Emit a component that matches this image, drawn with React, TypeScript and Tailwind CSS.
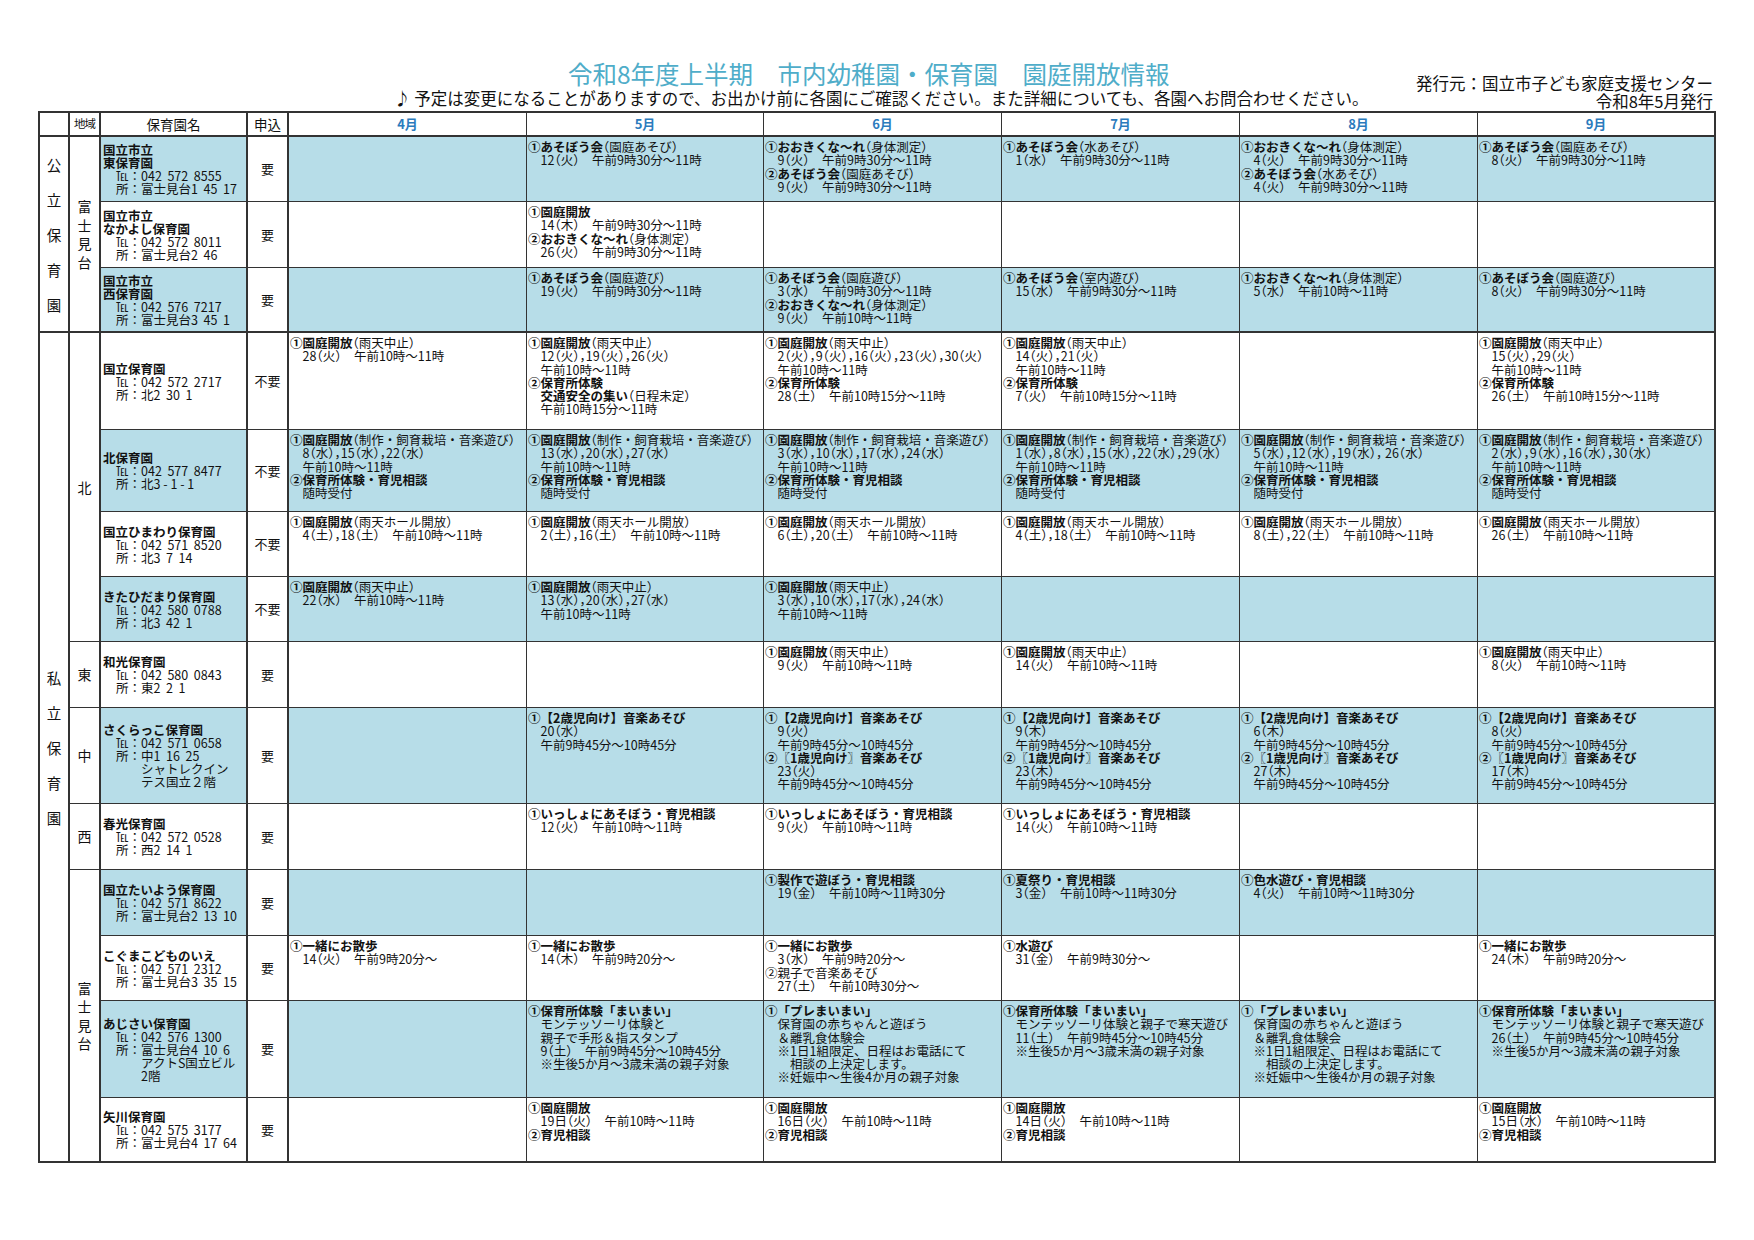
import React from "react";

type Row = {
  name: string[];
  tel: string;
  addr: string[];
  apply: string;
  blue: boolean;
  thick?: boolean;
  months: string[][];
};

const t10 = "午前10時～11時";
const t930 = "午前9時30分～11時";
const t945 = "午前9時45分～10時45分";

const kita = (d: string) => [
  "*①園庭開放*(制作・飼育栽培・音楽遊び)",
  "　" + d,
  "　" + t10,
  "*②保育所体験・育児相談*",
  "　随時受付",
];
const hima = (d: string) => ["*①園庭開放*(雨天ホール開放)", "　" + d + "　" + t10];
const rain = (d: string) => ["*①園庭開放*(雨天中止)", "　" + d + "　" + t10];
const music = (d1: string, d2: string) => [
  "*①【2歳児向け】音楽あそび*",
  "　" + d1,
  "　" + t945,
  "*②〖1歳児向け〗音楽あそび*",
  "　" + d2,
  "　" + t945,
];
const issho = (d: string) => ["*①いっしょにあそぼう・育児相談*", "　" + d + "　" + t10];
const walk = (d: string) => ["*①一緒にお散歩*", "　" + d + "　午前9時20分～"];
const maimai = (d: string) => [
  "*①保育所体験「まいまい」*",
  "　モンテッソーリ体験と親子で寒天遊び",
  "　" + d + "　" + t945,
  "　※生後5か月～3歳未満の親子対象",
];
const pre = [
  "*①「プレまいまい」*",
  "　保育園の赤ちゃんと遊ぼう",
  "　＆離乳食体験会",
  "　※1日1組限定、日程はお電話にて",
  "　　相談の上決定します。",
  "　※妊娠中～生後4か月の親子対象",
];
const yagawa = (d: string) => ["*①園庭開放*", "　" + d + "　" + t10, "*②育児相談*"];
const taiken = (d: string, t: string) => [
  "*①園庭開放*(雨天中止)",
  "　" + d,
  "　" + t10,
  "*②保育所体験*",
  "　" + t,
];

const rows: Row[] = [
  {
    name: ["国立市立", "東保育園"],
    tel: "042  572  8555",
    addr: ["富士見台1  45  17"],
    apply: "要",
    blue: true,
    months: [
      [],
      ["*①あそぼう会*(園庭あそび)", "　12(火)　" + t930],
      ["*①おおきくな～れ*(身体測定)", "　9(火)　" + t930, "*②あそぼう会*(園庭あそび)", "　9(火)　" + t930],
      ["*①あそぼう会*(水あそび)", "　1(水)　" + t930],
      ["*①おおきくな～れ*(身体測定)", "　4(火)　" + t930, "*②あそぼう会*(水あそび)", "　4(火)　" + t930],
      ["*①あそぼう会*(園庭あそび)", "　8(火)　" + t930],
    ],
  },
  {
    name: ["国立市立", "なかよし保育園"],
    tel: "042  572  8011",
    addr: ["富士見台2  46"],
    apply: "要",
    blue: false,
    months: [
      [],
      ["*①園庭開放*", "　14(木)　" + t930, "*②おおきくな～れ*(身体測定)", "　26(火)　" + t930],
      [],
      [],
      [],
      [],
    ],
  },
  {
    name: ["国立市立", "西保育園"],
    tel: "042  576  7217",
    addr: ["富士見台3  45  1"],
    apply: "要",
    blue: true,
    thick: true,
    months: [
      [],
      ["*①あそぼう会*(園庭遊び)", "　19(火)　" + t930],
      ["*①あそぼう会*(園庭遊び)", "　3(水)　" + t930, "*②おおきくな～れ*(身体測定)", "　9(火)　" + t10],
      ["*①あそぼう会*(室内遊び)", "　15(水)　" + t930],
      ["*①おおきくな～れ*(身体測定)", "　5(水)　" + t10],
      ["*①あそぼう会*(園庭遊び)", "　8(火)　" + t930],
    ],
  },
  {
    name: ["国立保育園"],
    tel: "042  572  2717",
    addr: ["北2  30  1"],
    apply: "不要",
    blue: false,
    months: [
      ["*①園庭開放*(雨天中止)", "　28(火)　" + t10],
      [
        "*①園庭開放*(雨天中止)",
        "　12(火),19(火),26(火)",
        "　" + t10,
        "*②保育所体験*",
        "　*交通安全の集い*(日程未定)",
        "　午前10時15分～11時",
      ],
      taiken("2(火),9(火),16(火),23(火),30(火)", "28(土)　午前10時15分～11時"),
      taiken("14(火),21(火)", "7(火)　午前10時15分～11時"),
      [],
      taiken("15(火),29(火)", "26(土)　午前10時15分～11時"),
    ],
  },
  {
    name: ["北保育園"],
    tel: "042  577  8477",
    addr: ["北3 - 1 - 1"],
    apply: "不要",
    blue: true,
    months: [
      kita("8(水),15(水),22(水)"),
      kita("13(水),20(水),27(水)"),
      kita("3(水),10(水),17(水),24(水)"),
      kita("1(水),8(水),15(水),22(水),29(水)"),
      kita("5(水),12(水),19(水), 26(水)"),
      kita("2(水),9(水),16(水),30(水)"),
    ],
  },
  {
    name: ["国立ひまわり保育園"],
    tel: "042  571  8520",
    addr: ["北3  7  14"],
    apply: "不要",
    blue: false,
    months: [
      hima("4(土),18(土)"),
      hima("2(土),16(土)"),
      hima("6(土),20(土)"),
      hima("4(土),18(土)"),
      hima("8(土),22(土)"),
      hima("26(土)"),
    ],
  },
  {
    name: ["きたひだまり保育園"],
    tel: "042  580  0788",
    addr: ["北3  42  1"],
    apply: "不要",
    blue: true,
    months: [
      rain("22(水)"),
      ["*①園庭開放*(雨天中止)", "　13(水),20(水),27(水)", "　" + t10],
      ["*①園庭開放*(雨天中止)", "　3(水),10(水),17(水),24(水)", "　" + t10],
      [],
      [],
      [],
    ],
  },
  {
    name: ["和光保育園"],
    tel: "042  580  0843",
    addr: ["東2  2  1"],
    apply: "要",
    blue: false,
    months: [[], [], rain("9(火)"), rain("14(火)"), [], rain("8(火)")],
  },
  {
    name: ["さくらっこ保育園"],
    tel: "042  571  0658",
    addr: ["中1  16  25", "シャトレクイン", "テス国立２階"],
    apply: "要",
    blue: true,
    months: [
      [],
      ["*①【2歳児向け】音楽あそび*", "　20(水)", "　" + t945],
      music("9(火)", "23(火)"),
      music("9(木)", "23(木)"),
      music("6(木)", "27(木)"),
      music("8(火)", "17(木)"),
    ],
  },
  {
    name: ["春光保育園"],
    tel: "042  572  0528",
    addr: ["西2  14  1"],
    apply: "要",
    blue: false,
    months: [[], issho("12(火)"), issho("9(火)"), issho("14(火)"), [], []],
  },
  {
    name: ["国立たいよう保育園"],
    tel: "042  571  8622",
    addr: ["富士見台2  13  10"],
    apply: "要",
    blue: true,
    months: [
      [],
      [],
      ["*①製作で遊ぼう・育児相談*", "　19(金)　午前10時～11時30分"],
      ["*①夏祭り・育児相談*", "　3(金)　午前10時～11時30分"],
      ["*①色水遊び・育児相談*", "　4(火)　午前10時～11時30分"],
      [],
    ],
  },
  {
    name: ["こぐまこどものいえ"],
    tel: "042  571  2312",
    addr: ["富士見台3  35  15"],
    apply: "要",
    blue: false,
    months: [
      walk("14(火)"),
      walk("14(木)"),
      ["*①一緒にお散歩*", "　3(水)　午前9時20分～", "②親子で音楽あそび", "　27(土)　午前10時30分～"],
      ["*①水遊び*", "　31(金)　午前9時30分～"],
      [],
      walk("24(木)"),
    ],
  },
  {
    name: ["あじさい保育園"],
    tel: "042  576  1300",
    addr: ["富士見台4  10  6", "アクトS国立ビル", "2階"],
    apply: "要",
    blue: true,
    months: [
      [],
      [
        "*①保育所体験「まいまい」*",
        "　モンテッソーリ体験と",
        "　親子で手形＆指スタンプ",
        "　9(土)　" + t945,
        "　※生後5か月～3歳未満の親子対象",
      ],
      pre,
      maimai("11(土)"),
      pre,
      maimai("26(土)"),
    ],
  },
  {
    name: ["矢川保育園"],
    tel: "042  575  3177",
    addr: ["富士見台4  17  64"],
    apply: "要",
    blue: false,
    thick: true,
    months: [[], yagawa("19日(火)"), yagawa("16日(火)"), yagawa("14日(火)"), [], yagawa("15日(水)")],
  },
];

function punct(p: string) {
  const out: React.ReactNode[] = [];
  let buf = "";
  for (const ch of p) {
    if (ch === "(" || ch === ")" || ch === ",") {
      if (buf) out.push(buf);
      buf = "";
      out.push(
        <span key={out.length} className="[font-feature-settings:'halt']">
          {ch === "(" ? "（" : ch === ")" ? "）" : "，"}
        </span>
      );
    } else buf += ch;
  }
  if (buf) out.push(buf);
  return out;
}

function Line({ s }: { s: string }) {
  const parts = s.split("*");
  return (
    <div>
      {parts.map((p, i) => (
        <span key={i} className={i % 2 ? "font-bold" : ""}>
          {punct(p)}
        </span>
      ))}
    </div>
  );
}

const months = ["4月", "5月", "6月", "7月", "8月", "9月"];

export default function App() {
  return (
    <div className="w-[1754px] h-[1240px] bg-white pt-[59px] pl-[38px] font-['Noto_Sans_CJK_JP',sans-serif] text-[#111]">
      <div className="flex w-[1678px] items-end">
        <div className="flex-1">
          <div className="pl-[530px] text-[24.5px] leading-[30px] text-[#4fadc9]">
            令和8年度上半期　市内幼稚園・保育園　園庭開放情報
          </div>
          <div className="pl-[356px] text-[16.5px] leading-[19px]">
            ♪ 予定は変更になることがありますので、お出かけ前に各園にご確認ください。また詳細についても、各園へお問合わせください。
          </div>
        </div>
        <div className="-mb-[2px] pr-[3px] text-right text-[16.5px] leading-[18px]">
          <div>発行元：国立市子ども家庭支援センター</div>
          <div>令和8年5月発行</div>
        </div>
      </div>

      <div className="mt-[3px] grid w-fit grid-cols-[30px_31px_147px_41px_238px_237px_238px_238px_238px_238px] grid-rows-[24px_65px_66px_65px_97px_82px_65px_65px_66px_96px_66px_66px_65px_97px_65px] border-l-2 border-t-2 border-[#333]">
        {/* header */}
        <div className="border-r-2 border-b-2 border-[#333]" />
        <div className="flex items-center justify-center border-r-2 border-b-2 border-[#333] text-[11.5px] tracking-[-1px]">
          地域
        </div>
        <div className="flex items-center justify-center border-r-2 border-b-2 border-[#333] text-[13.5px]">
          保育園名
        </div>
        <div className="flex items-center justify-center border-r-2 border-b-2 border-[#333] text-[13.5px]">
          申込
        </div>
        {months.map((m, i) => (
          <div
            key={m}
            className={`flex items-center justify-center border-b-2 border-[#333] text-[13px] font-bold text-[#2b7bbd] ${
              i === 5 ? "border-r-2" : "border-r"
            }`}
          >
            {m}
          </div>
        ))}

        {/* merged side cells */}
        <div className="col-start-1 row-start-2 row-span-3 flex flex-col items-center justify-center border-r-2 border-b-2 border-[#333] text-[14.5px] leading-[35px]">
          {"公立保育園".split("").map((c) => (
            <div key={c}>{c}</div>
          ))}
        </div>
        <div className="col-start-2 row-start-2 row-span-3 flex flex-col items-center justify-center border-r-2 border-b-2 border-[#333] text-[14px] leading-[18.5px]">
          {"富士見台".split("").map((c) => (
            <div key={c}>{c}</div>
          ))}
        </div>
        <div className="col-start-1 row-start-5 row-span-11 flex flex-col items-center justify-center border-r-2 border-b-2 border-[#333] text-[14.5px] leading-[35px]">
          {["私", "立", "保", "育", "園"].map((c) => (
            <div key={c}>{c}</div>
          ))}
        </div>
        <div className="col-start-2 row-start-5 row-span-4 flex items-center justify-center border-r-2 border-b border-[#333] text-[14px]">
          北
        </div>
        <div className="col-start-2 row-start-9 flex items-center justify-center border-r-2 border-b border-[#333] text-[14px]">
          東
        </div>
        <div className="col-start-2 row-start-10 flex items-center justify-center border-r-2 border-b border-[#333] text-[14px]">
          中
        </div>
        <div className="col-start-2 row-start-11 flex items-center justify-center border-r-2 border-b border-[#333] text-[14px]">
          西
        </div>
        <div className="col-start-2 row-start-12 row-span-4 flex flex-col items-center justify-center border-r-2 border-b-2 border-[#333] text-[14px] leading-[18.5px]">
          {"富士見台".split("").map((c) => (
            <div key={c}>{c}</div>
          ))}
        </div>

        {/* data rows */}
        {rows.map((r, ri) => {
          const bb = r.thick ? "border-b-2" : "border-b";
          const bg = r.blue ? "bg-[#b7dde8]" : "bg-white";
          return (
            <React.Fragment key={ri}>
              <div
                className={`flex flex-col justify-center border-r-2 border-[#333] pl-[2px] text-[12.5px] leading-[13px] whitespace-pre ${bb} ${bg}`}
              >
                {r.name.map((n) => (
                  <div key={n} className="font-bold">
                    {n}
                  </div>
                ))}
                <div className="pl-[13px]">℡：{r.tel}</div>
                <div className="pl-[13px]">所：{r.addr[0]}</div>
                {r.addr.slice(1).map((a) => (
                  <div key={a} className="pl-[38px]">
                    {a}
                  </div>
                ))}
              </div>
              <div
                className={`flex items-center justify-center border-r-2 border-[#333] bg-white text-[13px] ${bb}`}
              >
                {r.apply}
              </div>
              {r.months.map((lines, mi) => (
                <div
                  key={mi}
                  className={`overflow-hidden border-[#333] pl-[1px] pt-[3px] text-[12.5px] leading-[13.3px] whitespace-pre ${bb} ${bg} ${
                    mi === 5 ? "border-r-2" : "border-r"
                  }`}
                >
                  {lines.map((l, li) => (
                    <Line key={li} s={l} />
                  ))}
                </div>
              ))}
            </React.Fragment>
          );
        })}
      </div>
    </div>
  );
}
